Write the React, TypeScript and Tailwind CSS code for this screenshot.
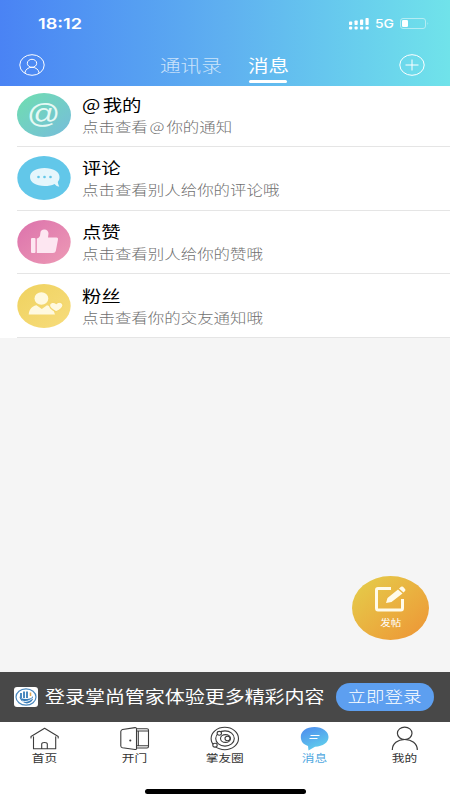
import type { ReactNode } from 'react';

function Wide({ children, className = '' }: { children: ReactNode; className?: string }) {
  return <span className={`inline-block origin-left scale-x-[1.21] whitespace-nowrap ${className}`}>{children}</span>;
}

function Center({ children, className = '' }: { children: ReactNode; className?: string }) {
  return <span className={`inline-block origin-center scale-x-[1.21] whitespace-nowrap ${className}`}>{children}</span>;
}

function AtIcon() {
  return (
    <div className="flex h-11 w-[54px] items-center justify-center rounded-[50%] bg-linear-to-br from-[#6fdeae] to-[#77bcdb]">
      <Center className="-mt-[3px] font-['Liberation_Sans'] text-[27px] leading-[30px] text-[#e6f9f4]">@</Center>
    </div>
  );
}

function CommentIcon() {
  return (
    <svg viewBox="0 0 54 44" className="h-11 w-[54px]">
      <ellipse cx="27" cy="22" rx="26.7" ry="22" fill="#62c7e9" />
      <path d="M27.5 12C19 12 13 15.500 13 21S19 30 27.500 30C31.500 30 35 29.400 37.500 28Q39.500 30.500 42.300 30.800 41 28.500 40.800 26C42 24.500 42.500 23 42.500 21 42.500 15.500 36 12 27.500 12Z" fill="#e5f6fc" />
      <g fill="#62c7e9"><circle cx="21.500" cy="21" r="1.300" /><circle cx="27.500" cy="21" r="1.300" /><circle cx="33.500" cy="21" r="1.300" /></g>
    </svg>
  );
}

function LikeIcon() {
  return (
    <svg viewBox="0 0 54 44" className="h-11 w-[54px]">
      <defs>
        <linearGradient id="like" x1="0" y1="0" x2="1" y2="1">
          <stop offset="0" stopColor="#dc72ac" />
          <stop offset="1" stopColor="#ed9ab5" />
        </linearGradient>
      </defs>
      <ellipse cx="27" cy="22" rx="26.700" ry="22" fill="url(#like)" />
      <g fill="#fde6f1">
        <rect x="14" y="18" width="4.500" height="15" rx="1" />
        <path d="M19.800 18.500C22 18 23.300 16.500 23.300 13.500 23.300 11 25 9.600 27.300 9.600 30 9.600 31.500 11.500 31.500 13.500L31 17.500H39.500Q41.500 17.500 41 19.500L38.800 31Q38.300 33 36 33H19.800Z" />
      </g>
    </svg>
  );
}

function FansIcon() {
  return (
    <svg viewBox="0 0 54 44" className="h-11 w-[54px]">
      <defs>
        <linearGradient id="fans" x1="0" y1="0" x2="1" y2="1">
          <stop offset="0" stopColor="#efd25f" />
          <stop offset="1" stopColor="#f7dc7c" />
        </linearGradient>
      </defs>
      <ellipse cx="27" cy="22" rx="26.700" ry="22" fill="url(#fans)" />
      <g fill="#fff9df">
        <ellipse cx="24.400" cy="14.500" rx="6.900" ry="6.200" />
        <path d="M11.700 30.500C12.200 25 15.500 21.800 19.500 21.300L24.800 25 30 21.300Q34 21.800 36 25L38 30.500Z" />
        <path d="M39 27.800C34.500 25.500 32.300 23.500 32.500 21 33 18 37 17.500 39.300 19.500 42 17 46.200 18.300 46 21.500 45.500 24.500 42.500 26.300 39 27.800Z" stroke="#f3d66c" strokeWidth="1.200" />
      </g>
    </svg>
  );
}

const rows = [
  { icon: <AtIcon />, key: 'at', title: <><span className="mr-[2px]">@</span>我的</>, text: <>点击查看<span className="mx-[1.5px]">@</span>你的通知</>, size: 'h-[61px]', pad: 'pt-[7px]' },
  { icon: <CommentIcon />, key: 'comment', title: '评论', text: '点击查看别人给你的评论哦', size: 'h-16', pad: 'pt-[9px]' },
  { icon: <LikeIcon />, key: 'like', title: '点赞', text: '点击查看别人给你的赞哦', size: 'h-[63px]', pad: 'pt-[9px]' },
  { icon: <FansIcon />, key: 'fans', title: '粉丝', text: '点击查看你的交友通知哦', size: 'h-16', pad: 'pt-[10px]' },
];

function HomeIcon() {
  return (
    <svg viewBox="0 0 30 26" className="h-[26px] w-[30px]" fill="none" stroke="#3c3c3c" strokeWidth="1.1" strokeLinejoin="round" strokeLinecap="round">
      <path d="M3.500 10.800V22.800H25.700V10.800M1 12V10.500L14.600 2.300 28.200 10.500V12M11.700 22.500V18Q11.700 16.500 14.500 16.500T17.300 18V22.500" />
    </svg>
  );
}

function DoorIcon() {
  return (
    <svg viewBox="0 0 30 26" className="h-[26px] w-[30px]" fill="none" stroke="#3c3c3c" strokeWidth="1.1" strokeLinejoin="round">
      <path d="M2.500 3.500 15 1.600Q16.500 1.500 16.500 3V22.500Q16.500 23.800 15 23.500L2.500 21.800Q1 21.500.8 20V5.500Q1 4 2.500 3.500ZM16.500 2.800H27Q28.500 2.800 28.500 4V20.500Q28.500 22 27 22H16.500M17 5H28.500M17 19.800H28.500M18.300 5V19.800" />
      <circle cx="10.300" cy="14.500" r="0.500" fill="#3c3c3c" />
    </svg>
  );
}

function CircleIcon() {
  return (
    <svg viewBox="0 0 30 26" className="h-[26px] w-[30px]" fill="none" stroke="#3c3c3c" strokeWidth="1.1">
      <ellipse cx="14.800" cy="12.500" rx="13.700" ry="11.200" />
      <ellipse cx="15" cy="12.500" rx="9.300" ry="7.600" />
      <ellipse cx="15.500" cy="12.500" rx="5" ry="3.900" />
      <ellipse cx="17.500" cy="12.500" rx="2.500" ry="2.200" />
      <ellipse cx="9.300" cy="7.300" rx="2.200" ry="1.900" fill="white" />
      <ellipse cx="5" cy="19.200" rx="2.200" ry="1.900" fill="white" />
    </svg>
  );
}

function MessageIcon() {
  return (
    <svg viewBox="0 0 30 26" className="h-[26px] w-[30px]">
      <defs>
        <linearGradient id="msg" x1="0.200" y1="0" x2="0.700" y2="1">
          <stop offset="0" stopColor="#4e8fee" />
          <stop offset="1" stopColor="#62d2ec" />
        </linearGradient>
      </defs>
      <path d="M14.500 1C6.500 1 .8 5 .8 11 .8 15.500 3.500 18.500 8 20L8.500 24.500 15 20.700C23 20.500 28.500 16.500 28.500 11S22.500 1 14.500 1Z" fill="url(#msg)" />
      <path d="M10.500 9.500H19.500M9.500 12.500H17.500" stroke="white" strokeWidth="1" />
    </svg>
  );
}

function MeIcon() {
  return (
    <svg viewBox="0 0 30 26" className="h-[26px] w-[30px]" fill="none" stroke="#3c3c3c" strokeWidth="1.2">
      <ellipse cx="14.700" cy="7.300" rx="7.300" ry="6.200" />
      <path d="M2.300 24C2.300 17.500 7.700 13.500 14.700 13.500S27.300 17.500 27.300 24" />
    </svg>
  );
}

const tabs = [
  { icon: <HomeIcon />, label: '首页', active: false },
  { icon: <DoorIcon />, label: '开门', active: false },
  { icon: <CircleIcon />, label: '掌友圈', active: false },
  { icon: <MessageIcon />, label: '消息', active: true },
  { icon: <MeIcon />, label: '我的', active: false },
];

export default function App() {
  return (
    <div className="flex h-[800px] w-[450px] flex-col overflow-hidden bg-[#f5f5f5] font-['Noto_Sans_CJK_SC','Noto_Sans',sans-serif]">
      <header className="flex h-[86px] shrink-0 flex-col bg-linear-to-r from-[#4a83f4] via-[#5fb0f0] to-[#70e3ea] text-white">
        <div className="flex h-[46px] items-center justify-between pr-[21px] pl-[38px]">
          <Wide className="pt-px font-['Inter'] text-[15px] leading-none font-semibold">18:12</Wide>
          <div className="flex items-center gap-[6px]">
            <svg viewBox="0 0 20 12" className="mt-px h-3 w-5" fill="white">
              <rect x="0" y="3.500" width="3.200" height="3.500" rx=".8" /><rect x="5.500" y="2.500" width="3.200" height="4.500" rx=".8" /><rect x="11" y="1.500" width="3.200" height="5.500" rx=".8" /><rect x="16.500" y="0" width="3.200" height="7" rx=".8" />
              <rect x="0" y="8.500" width="3.200" height="3" rx="1" /><rect x="5.500" y="8.500" width="3.200" height="3" rx="1" /><rect x="11" y="8.500" width="3.200" height="3" rx="1" /><rect x="16.500" y="8.500" width="3.200" height="3" rx="1" />
            </svg>
            <Wide className="w-[19px] pt-[4px] font-['Inter'] text-[11.5px] leading-none font-medium">5G</Wide>
            <svg viewBox="0 0 29 11" className="h-[11px] w-[29px]" fill="none">
              <rect x=".5" y=".5" width="25" height="10" rx="2.500" stroke="#b5ecf3" />
              <rect x="2" y="2" width="6" height="7" rx="1.300" fill="white" />
              <path d="M27.500 4V7Q29 5.500 27.500 4Z" fill="#b5ecf3" />
            </svg>
          </div>
        </div>
        <div className="flex h-10 items-start justify-between pr-[25px] pl-[19px]">
          <svg viewBox="0 0 26 22" className="mt-2 h-[22px] w-[26px]" fill="none" stroke="white" strokeWidth="1">
            <ellipse cx="13" cy="11" rx="12.200" ry="10.300" /><ellipse cx="13" cy="9.300" rx="4.700" ry="4" />
            <path d="M5.800 19C6.500 15.500 9 13.300 13 13.300S19.500 15.500 20.200 19" />
          </svg>
          <div className="flex gap-[26px] pl-[6px] text-[17px] leading-none">
            <span className="w-[62px] pt-[10px] font-light text-white/70"><Wide>通讯录</Wide></span>
            <span className="flex w-[42px] flex-col pt-[10px]"><Wide>消息</Wide><i className="mt-[7px] ml-px h-[3px] w-[38px] rounded-full bg-white" /></span>
          </div>
          <svg viewBox="0 0 26 22" className="mt-2 h-[22px] w-[26px]" fill="none" stroke="white" strokeWidth="1">
            <ellipse cx="13" cy="11" rx="12.200" ry="10.300" /><path d="M6.500 11H19.500M13 5.500V16.500" />
          </svg>
        </div>
      </header>
      <main className="flex-1">
        <section className="h-[252px] bg-white">
          {rows.map((r) => (
            <div key={r.key} className={`ml-[17px] flex border-b border-[#e5e5e5] ${r.size}`}>
              <div className={r.pad}>{r.icon}</div>
              <div className={`ml-[11px] flex flex-col ${r.pad}`}>
                <Wide className="mt-[2px] text-[16px] leading-[18px] text-black">{r.title}</Wide>
                <Wide className="mt-[4px] text-[13.6px] leading-[18px] font-light text-[#6f6f6f]">{r.text}</Wide>
              </div>
            </div>
          ))}
        </section>
        <div className="flex h-[303px] justify-end pt-[238px] pr-[21px]">
          <button className="flex h-16 w-[77px] shrink-0 flex-col items-center rounded-[50%] bg-linear-to-br from-[#e3cf4b] to-[#ed9335] text-white">
            <svg viewBox="0 0 32 26" className="mt-[10px] mr-[1px] h-[26px] w-8" fill="none">
              <path d="M17 2.500H4Q2.500 2.500 2.500 4V22Q2.500 24 4 24H27Q28.500 24 28.500 22V13" stroke="#fffbea" strokeWidth="3" />
              <path d="M12 17 13.500 12 24 3.500 28.500 7.500 17.500 16ZM25 2.500 27 .8Q28 0 29 .8L31 3Q32 4 31 5L29.500 6.500Z" fill="#fffbea" />
            </svg>
            <Center className="mt-[6px] text-[8.7px] leading-[10px]">发帖</Center>
          </button>
        </div>
      </main>
      <aside className="flex h-[50px] shrink-0 items-center bg-[#484848] pl-[14px] text-white">
        <svg viewBox="0 0 24 20" className="h-5 w-6">
          <rect width="24" height="20" rx="3" fill="white" />
          <ellipse cx="12" cy="10" rx="10" ry="8.200" fill="none" stroke="#4a88be" strokeWidth="1.200" />
          <path d="M7 6V11M10 4.500V11M13 4.500V11" stroke="#397db9" strokeWidth="1.800" />
          <path d="M16.500 5.500V9" stroke="#e2a653" strokeWidth="1.500" />
          <path d="M5 9Q6 12 12 12T19 9Q20 15 13 16.500 7 16 5 9Z" fill="#397db9" />
          <path d="M8 14Q13 16 19 11" stroke="white" strokeWidth=".9" fill="none" />
        </svg>
        <Wide className="ml-[7px] w-[291px] pb-[2px] text-[16.5px] leading-none">登录掌尚管家体验更多精彩内容</Wide>
        <button className="flex h-7 w-[98px] shrink-0 items-center justify-center rounded-full bg-[#5d9ff0] pb-[2px] text-[15.3px] leading-none font-light"><Center>立即登录</Center></button>
      </aside>
      <nav className="flex h-[78px] shrink-0 flex-col items-center bg-white">
        <div className="grid w-full grid-cols-5 pt-[4px]">
          {tabs.map((t) => (
            <div key={t.label} className="flex flex-col items-center">
              {t.icon}
              <Center className={`-mt-px -ml-px text-[10.5px] leading-[14px] ${t.active ? 'text-[#51a9df]' : 'text-[#333]'}`}>{t.label}</Center>
            </div>
          ))}
        </div>
        <div className="mt-6 h-[5px] w-[161px] rounded-full bg-black" />
      </nav>
    </div>
  );
}
